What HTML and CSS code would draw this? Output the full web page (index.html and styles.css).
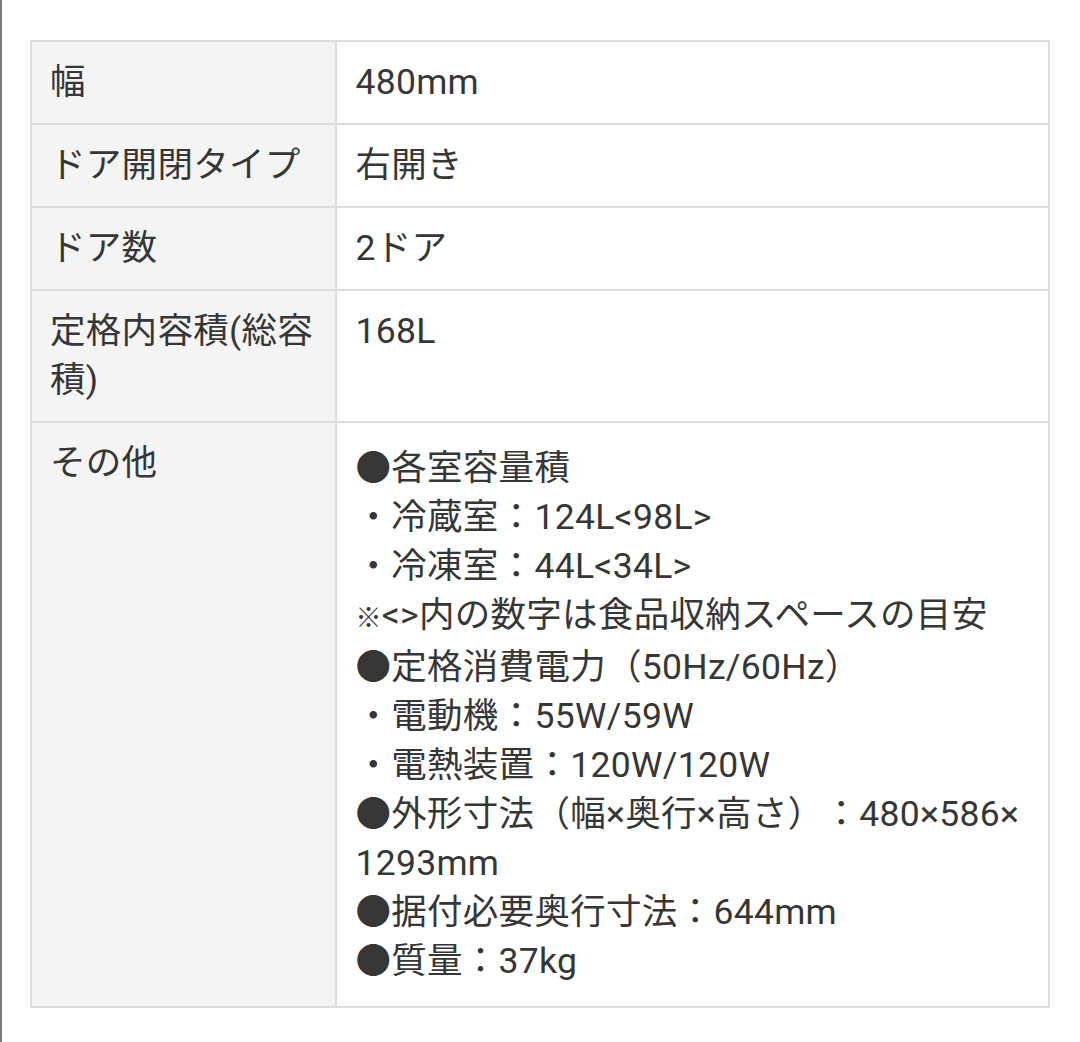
FILE: index.html
```html
<!DOCTYPE html>
<html lang="ja">
<head>
<meta charset="utf-8">
<title>仕様</title>
<link rel="stylesheet" href="styles.css">
</head>
<body>
<div class="page">
  <table class="spec">
    <tr>
      <th>幅</th>
      <td>480mm</td>
    </tr>
    <tr>
      <th>ドア開閉タイプ</th>
      <td>右開き</td>
    </tr>
    <tr>
      <th>ドア数</th>
      <td>2ドア</td>
    </tr>
    <tr>
      <th>定格内容積(総容積)</th>
      <td>168L</td>
    </tr>
    <tr>
      <th>その他</th>
      <td class="other">●各室容量積<br>・冷蔵室：124L&lt;98L&gt;<br>・冷凍室：44L&lt;34L&gt;<br><span class="note">※</span>&lt;&gt;内の数字は食品収納スペースの目安<br>●定格消費電力（50Hz/60Hz）<br>・電動機：55W/59W<br>・電熱装置：120W/120W<br>●外形寸法（幅×奥行×高さ）：480×586×<wbr>1293mm<br>●据付必要奥行寸法：644mm<br>●質量：37kg</td>
    </tr>
  </table>
</div>
</body>
</html>
```

FILE: styles.css
```css
html, body {
  margin: 0;
  padding: 0;
  background: #ffffff;
}

.page {
  box-sizing: border-box;
  min-height: 1042px;
  border-left: 2px solid #7a7a7a;
  padding: 40px 30px 0 28px;
  font-family: Roboto, "Noto Sans CJK JP", sans-serif;
  color: #363636;
}

.spec {
  width: 100%;
  border-collapse: collapse;
  font-size: 35.5px;
  line-height: 49px;
  letter-spacing: 0.3px;
  text-spacing-trim: space-all;
}

.spec th,
.spec td {
  border: 2px solid #dcdcdc;
  padding: 16px 18px;
  text-align: left;
  vertical-align: top;
  font-weight: normal;
}

.spec th {
  width: 30%;
  background: #f4f4f4;
}

.spec td {
  background: #ffffff;
  padding-right: 8px;
}

.spec .other {
  padding-top: 21px;
  padding-bottom: 20px;
}

.note {
  font-size: 26px;
}
```
